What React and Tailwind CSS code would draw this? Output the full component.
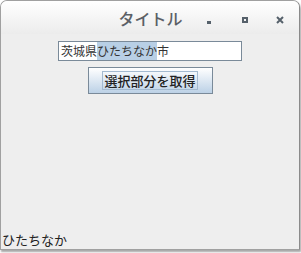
import React from "react";

const jp = { fontFamily: '"Noto Sans CJK JP", "Liberation Sans", sans-serif' };

const TitleBar = () => {
  return (
    <div className="relative h-[33px] shrink-0 flex items-center justify-center bg-gradient-to-b from-white to-[#ececec] rounded-t-[6px]">
      <span className="text-[16px] leading-none text-[#5b6066] font-medium ml-[1px] mt-[1px]" style={jp}>
        タイトル
      </span>
      <div className="absolute top-[15px] right-0 flex items-center">
        {/* minimise */}
        <div className="w-[12px] h-[7px] flex items-end justify-center mr-[24px]">
          <div className="w-[4px] h-[3px] bg-[#56616b]" />
        </div>
        {/* maximise */}
        <div className="w-[12px] h-[6px] flex items-center justify-center mr-[25px]">
          <div className="w-[6px] h-[6px] border-2 border-[#56616b]" />
        </div>
        {/* close */}
        <svg width="8" height="8" viewBox="0 0 8 8" className="mr-[15px]">
          <path d="M1 1 L7 7 M7 1 L1 7" stroke="#56616b" strokeWidth="2" />
        </svg>
      </div>
    </div>
  );
};

const App = () => {
  return (
    <div className="w-[301px] h-[253px] bg-white pr-[1px] pb-[3px]">
      <div className="h-full flex flex-col border border-[#a0a0a0] border-r-[#8a8a8a] rounded-t-[7px] bg-[#eeeeee] shadow-[1px_2px_2px_rgba(0,0,0,0.35)]">
        <TitleBar />

        <div className="flex flex-col items-center pt-[7px]">
          <div className="w-[184px] h-[20px] border border-[#7a8a99] bg-white flex items-center pl-[2px] text-[12px] leading-none text-[#333]" style={jp}>
            <span>茨城県</span>
            <span className="bg-[#b8cfe5] h-[18px] flex items-center">ひたちなか</span>
            <span>市</span>
          </div>

          <button className="mt-[6px] w-[125px] h-[27px] border border-[#7a8a99] bg-gradient-to-b from-white to-[#bcd1e6] flex items-center justify-center">
            <span className="border border-[#a3bad0] px-[1px] h-[19px] flex items-center text-[13px] leading-none font-medium text-[#222]" style={jp}>
              選択部分を取得
            </span>
          </button>
        </div>

        <div className="flex-1" />
        <div className="pl-[1px] pb-[1px] text-[13px] leading-[16px] text-[#222]" style={jp}>
          ひたちなか
        </div>
      </div>
    </div>
  );
};

export default App;
